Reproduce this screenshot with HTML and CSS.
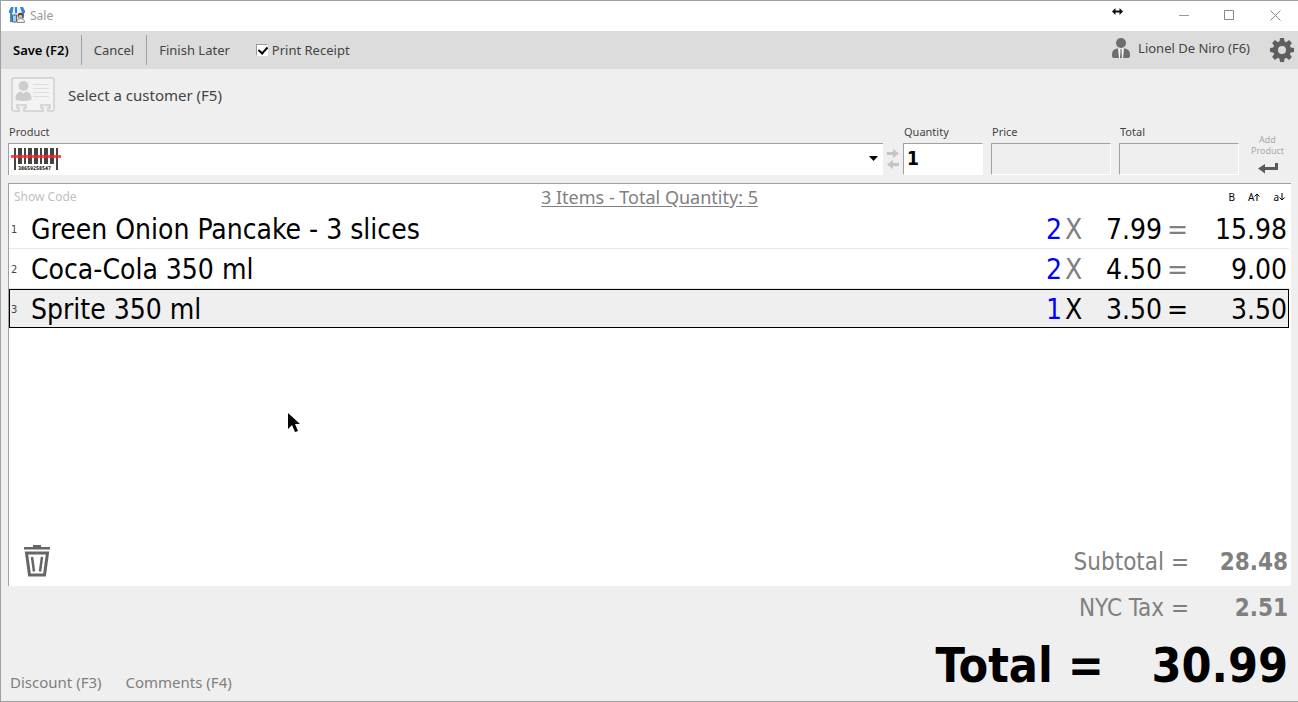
FILE: index.html
```html
<!DOCTYPE html>
<html lang="en">
<head>
  <meta charset="UTF-8">
  <meta name="viewport" content="width=device-width, initial-scale=1.0">
  <title>Sale</title>
  <link rel="stylesheet" href="styles.css">
</head>
<body>
  <div class="window">
    <header class="titlebar">
      <svg class="app-icon" width="16" height="16" viewBox="0 0 16 16">
        <path d="M1 5h14v10H1z" fill="#d9e6f2"/>
        <path d="M1 6v9h2V6zM13 6v5h2V6z" fill="#5b7fa8"/>
        <path d="M2 0h12l2 4v2H0V4z" fill="#e8f3ff"/>
        <path d="M2 0h2.500L3.500 6H0V4zM6 0h2v6H6zM11 0h3l2 4v2h-3z" fill="#2f86e8"/>
        <path d="M3.500 8h4v7h-4z" fill="#9ed0ee" stroke="#3d6c99"/>
        <path d="M8 15.500c0-3 1.500-4 3.500-4s4 1 4 4z" fill="#f2f2f2" stroke="#888"/>
        <circle cx="11.500" cy="8.500" r="2.800" fill="#6b3f22"/>
        <circle cx="11.500" cy="9.500" r="1.800" fill="#f0b98a"/>
      </svg>
      <h1 class="title">Sale</h1>
      <svg class="resize-cursor" width="11" height="7" viewBox="0 0 11 7">
        <path d="M0 3.500L3.500 0v2.500h4V0L11 3.500 7.500 7V4.500h-4V7z" fill="#111"/>
      </svg>
      <div class="window-buttons">
        <button class="window-button" aria-label="Minimize">
          <svg width="11" height="11" viewBox="0 0 11 11"><path d="M1 5.500h10" stroke="#999"/></svg>
        </button>
        <button class="window-button" aria-label="Maximize">
          <svg width="11" height="11" viewBox="0 0 11 11"><path d="M.5 .5h9v9h-9z" fill="none" stroke="#888"/></svg>
        </button>
        <button class="window-button" aria-label="Close">
          <svg width="11" height="11" viewBox="0 0 11 11"><path d="M.5 .5l10 10M10.500 .5l-10 10" stroke="#888"/></svg>
        </button>
      </div>
    </header>

    <div class="toolbar">
      <button class="tool save">Save (F2)</button>
      <button class="tool">Cancel</button>
      <button class="tool">Finish Later</button>
      <label class="print"><input type="checkbox" checked>Print Receipt</label>
      <button class="user">
        <svg width="18" height="20" viewBox="0 0 18 20" fill="#6e6e6e">
          <circle cx="9" cy="5" r="5"/>
          <path d="M0 18v-2c0-3 2-5 5-5.500l4 .500 4-.500c3 .500 5 2.500 5 5.500v2q0 2-2 2H2q-2 0-2-2z"/>
          <path d="M6 10.500h6L11 20H7z" fill="#f5f5f5"/>
          <path d="M8 11.500h2l-.500 1.500.5 7H8l.5-7z"/>
        </svg>
        Lionel De Niro (F6)
      </button>
      <button class="settings" aria-label="Settings">
        <svg width="24" height="24" viewBox="0 0 24 24">
          <g fill="#5f5f5f">
            <path id="tooth" d="M10 0h4l1 6H9z"/>
            <use href="#tooth" transform="rotate(45 12 12)"/>
            <use href="#tooth" transform="rotate(90 12 12)"/>
            <use href="#tooth" transform="rotate(135 12 12)"/>
            <use href="#tooth" transform="rotate(180 12 12)"/>
            <use href="#tooth" transform="rotate(225 12 12)"/>
            <use href="#tooth" transform="rotate(270 12 12)"/>
            <use href="#tooth" transform="rotate(315 12 12)"/>
          </g>
          <circle cx="12" cy="12" r="6.500" fill="none" stroke="#5f5f5f" stroke-width="5"/>
        </svg>
      </button>
    </div>

    <button class="customer">
      <svg width="44" height="35" viewBox="0 0 44 35">
        <path d="M3 1h38q2 0 2 2v29q0 2-2 2h-4v-3h2v-3h-9v3h2v3H13v-3h2v-3H6v3h2v3H3q-2 0-2-2V3q0-2 2-2z" fill="#f3f3f3" stroke="#cfcfcf" stroke-width="1.500"/>
        <circle cx="12.500" cy="9" r="5" fill="#cdcdcd"/>
        <path d="M4.500 23v-2c0-4 3-6 5-6.500l3 2 3-2c2 .500 5 2.500 5 6.500v2q-8 2-16 0z" fill="#cdcdcd"/>
        <path d="M22 7.500h16M22 11.500h16M22 15.500h16M22 19.500h16" stroke="#dedede"/>
      </svg>
      Select a customer (F5)
    </button>

    <div class="entry">
      <div class="field product">
        <label for="product">Product</label>
        <div class="combo">
          <svg width="50" height="24" viewBox="0 0 50 24">
            <path d="M3 1h2v22H3zM7 1h4v16H7zM13 1h2v16h-2zM17 1h4v16h-4zM23 1h4v16h-4zM29 1h2v16h-2zM33 1h4v16h-4zM39 1h4v16h-4zM45 1h2v22h-2z" fill="#444"/>
            <text class="barcode-digits" x="7" y="23">38659258547</text>
            <path d="M0 8h50v3H0z" fill="#f22" fill-opacity=".8"/>
          </svg>
          <input id="product" type="text">
          <button class="combo-arrow" aria-label="Show products">
            <svg width="9" height="5" viewBox="0 0 9 5"><path d="M0 0h9L4.500 5z"/></svg>
          </button>
        </div>
      </div>
      <button class="swap" aria-label="Swap">
        <svg width="12" height="20" viewBox="0 0 12 20" fill="#c4c4c4">
          <path d="M0 3h6V0l6 4.500L6 9V6H0zM12 14H6v-3L0 15.500 6 20v-3h6z"/>
        </svg>
      </button>
      <div class="field quantity">
        <label for="quantity">Quantity</label>
        <input id="quantity" type="text" value="1">
      </div>
      <div class="field amount">
        <label for="price">Price</label>
        <input id="price" type="text" disabled>
      </div>
      <div class="field amount">
        <label for="total">Total</label>
        <input id="total" type="text" disabled>
      </div>
      <button class="add">
        <span>Add</span>
        <span>Product</span>
        <svg width="20" height="12" viewBox="0 0 20 12"><path d="M17 1h3v7H7v3.500L0 6.500 7 2v3h10z" fill="#5a5a5a"/></svg>
      </button>
    </div>

    <main class="list">
      <div class="list-head">
        <button class="show-code">Show Code</button>
        <a class="summary" href="#">3 Items - Total Quantity: 5</a>
        <div class="font-tools">
          <button>B</button>
          <button>A<svg width="6" height="8" viewBox="0 0 6 8"><path d="M3 8V1M.5 3.500L3 1l2.500 2.500" fill="none" stroke="#000"/></svg></button>
          <button>a<svg width="6" height="8" viewBox="0 0 6 8"><path d="M3 0v7M.5 4.500L3 7l2.500-2.500" fill="none" stroke="#000"/></svg></button>
        </div>
      </div>
      <table class="items">
        <colgroup>
          <col class="col-no">
          <col>
          <col class="col-qty">
          <col class="col-x">
          <col class="col-price">
          <col class="col-eq">
          <col class="col-sum">
        </colgroup>
        <tbody>
          <tr>
            <td class="no">1</td>
            <td>Green Onion Pancake - 3 slices</td>
            <td class="num qty">2</td>
            <td class="sign">X</td>
            <td class="num">7.99</td>
            <td class="sign">=</td>
            <td class="num">15.98</td>
          </tr>
          <tr>
            <td class="no">2</td>
            <td>Coca-Cola 350 ml</td>
            <td class="num qty">2</td>
            <td class="sign">X</td>
            <td class="num">4.50</td>
            <td class="sign">=</td>
            <td class="num">9.00</td>
          </tr>
          <tr class="selected">
            <td class="no">3</td>
            <td>Sprite 350 ml</td>
            <td class="num qty">1</td>
            <td class="sign">X</td>
            <td class="num">3.50</td>
            <td class="sign">=</td>
            <td class="num">3.50</td>
          </tr>
        </tbody>
      </table>
      <div class="list-foot">
        <button class="delete" aria-label="Delete item">
          <svg width="26" height="32" viewBox="0 0 26 32">
            <path d="M9 0h8v2h9v2.500H0V2h9z" fill="#666"/>
            <path d="M2.500 8h21L20.500 30h-15z" fill="none" stroke="#666" stroke-width="3"/>
            <path d="M8 12l2 14.500M18 12l-2 14.500" stroke="#666" stroke-width="2.500"/>
          </svg>
        </button>
        <div class="line">
          <span>Subtotal =</span>
          <strong>28.48</strong>
        </div>
      </div>
    </main>

    <footer class="footer">
      <div class="links">
        <button>Discount (F3)</button>
        <button>Comments (F4)</button>
      </div>
      <div class="totals">
        <div class="line">
          <span>NYC Tax =</span>
          <strong>2.51</strong>
        </div>
        <div class="grand">
          <span>Total =</span>
          <strong>30.99</strong>
        </div>
      </div>
    </footer>

    <!-- mouse pointer -->
    <svg class="pointer" width="12" height="19" viewBox="0 0 12 19">
      <path d="M0 0v16l4-4 3 7 3-1-3-7h5z"/>
    </svg>
  </div>
</body>
</html>
```
FILE: styles.css
```css
:root {
  --ui-font: "Noto Sans", "Open Sans", sans-serif;
  --list-font: "DejaVu Sans Condensed", "DejaVu Sans", sans-serif;
  --border-color: #a0a0a0;
  --panel-bg: #efefef;
  --bar-bg: #dcdcdc;
  --muted: #808080;
}
* {
  box-sizing: border-box;
}
body {
  margin: 0;
  background: var(--panel-bg);
  color: #444;
  font-family: var(--ui-font);
  font-size: 13px;
}
button {
  padding: 0;
  border: none;
  background: none;
  color: inherit;
  font: inherit;
  cursor: pointer;
}
svg {
  display: block;
  flex: none;
}
.window {
  position: relative;
  display: flex;
  flex-direction: column;
  min-height: 100vh;
  border: 1px solid var(--border-color);
  border-right: none;
}

/* Title bar */
.titlebar {
  display: flex;
  align-items: center;
  height: 30px;
  padding: 0 0 2px 8px;
  background: #fff;
}
.title {
  margin: 0 auto 0 5px;
  color: #999;
  font-size: 12px;
  font-weight: normal;
}
.resize-cursor {
  margin: 0 37px 8px 0;
}
.window-buttons {
  display: flex;
}
.window-button {
  display: flex;
  align-items: center;
  justify-content: center;
  width: 46px;
  height: 28px;
}

/* Toolbar */
.toolbar {
  display: flex;
  align-items: center;
  height: 38px;
  padding-right: 4px;
  background: var(--bar-bg);
}
.tool {
  height: 30px;
  padding: 0 12px;
}
.tool + .tool {
  border-left: 1px solid var(--border-color);
}
.tool.save {
  color: #000;
  font-weight: 600;
}
.print {
  display: flex;
  align-items: center;
  gap: 4px;
  margin-left: 14px;
}
.print input {
  appearance: none;
  width: 12px;
  height: 12px;
  margin: 0;
  border: 1px solid #999;
  border-right-color: #fff;
  border-bottom-color: #fff;
  background: #fff;
}
.print input:checked::before {
  content: "";
  display: block;
  width: 4px;
  height: 7px;
  margin-left: 3px;
  border: solid #000;
  border-width: 0 2px 2px 0;
  transform: rotate(42deg);
}
.user {
  display: flex;
  align-items: center;
  gap: 8px;
  margin: 0 20px 4px auto;
}

/* Customer */
.customer {
  display: flex;
  align-items: center;
  gap: 13px;
  align-self: flex-start;
  height: 51px;
  padding-left: 10px;
  font-size: 15px;
}

/* Product entry */
.entry {
  display: flex;
  align-items: flex-end;
  gap: 8px;
  height: 55px;
  padding: 0 10px 0 7px;
}
.field {
  display: flex;
  flex-direction: column;
  font-size: 11px;
}
.field label {
  margin-left: 1px;
  line-height: 13px;
  padding-bottom: 5px;
}
.field input {
  width: 100%;
  height: 32px;
  padding: 0 3px 2px;
  border: 1px solid var(--border-color);
  border-right-color: #fff;
  border-bottom-color: #fff;
  background: #fff;
  font-family: var(--list-font);
  font-size: 19px;
  font-weight: bold;
}
.field input:disabled {
  background: var(--panel-bg);
}
.field.product {
  flex: 1;
}
.field.quantity {
  width: 80px;
}
.field.amount {
  width: 120px;
}
.combo {
  display: flex;
  align-items: center;
  height: 32px;
  padding: 0 5px 2px 2px;
  border: solid var(--border-color);
  border-width: 1px 0 0 1px;
  background: #fff;
}
.field .combo input {
  flex: 1;
  height: 100%;
  border: none;
}
.barcode-digits {
  font-family: "DejaVu Sans Mono", monospace;
  font-size: 5px;
  font-weight: bold;
}
.swap {
  margin: 0 -4px 6px;
}
.add {
  display: flex;
  flex-direction: column;
  align-items: center;
  width: 41px;
  color: #aaa;
  font-size: 9px;
  line-height: 11px;
}
.add svg {
  margin: 6px 0 1px;
}

/* Item list */
.list {
  display: flex;
  flex: 1;
  flex-direction: column;
  margin: 8px 7px 0;
  padding-right: 2px;
  border: solid var(--border-color);
  border-width: 1px 0 0 1px;
  background: #fff;
}
.list-head {
  display: grid;
  grid-template-columns: 1fr auto 1fr;
  align-items: center;
  height: 25px;
  padding: 0 4px 0 5px;
}
.show-code {
  justify-self: start;
  color: #c0c0c0;
  font-size: 12px;
}
.summary {
  color: var(--muted);
  font-size: 18px;
  text-underline-offset: 2px;
}
.font-tools {
  display: flex;
  justify-self: end;
  gap: 13px;
  color: #000;
  font-size: 10px;
}
.font-tools button {
  display: flex;
  align-items: center;
}
.items {
  width: 100%;
  table-layout: fixed;
  border-spacing: 0;
  color: #000;
  font-family: var(--list-font);
  font-size: 28px;
  line-height: 36px;
}
.items td {
  height: 40px;
  padding: 3px 0 0;
  border-bottom: 1px solid #e8e8e8;
  white-space: nowrap;
}
.items .selected td {
  height: 39px;
  border-bottom: none;
}
.items tr.selected {
  outline: 1px solid #000;
  outline-offset: -1px;
  background: var(--panel-bg);
}
.col-no { width: 22px; }
.col-qty { width: 40px; }
.col-x { width: 25px; }
.col-price { width: 77px; }
.col-eq { width: 27px; }
.col-sum { width: 98px; }
.items .no {
  padding-left: 2px;
  color: #444;
  font-size: 11px;
}
.items .num {
  padding-right: 2px;
  text-align: right;
}
.items .qty {
  padding-right: 0;
  color: #00f;
}
.items .sign {
  padding-left: 3px;
  color: var(--muted);
}
.items .selected .sign {
  color: #000;
}
.list-foot {
  display: flex;
  align-items: center;
  justify-content: space-between;
  height: 50px;
  margin-top: auto;
  padding: 0 1px 0 15px;
}

/* Totals */
.line {
  display: flex;
  padding-top: 2px;
  color: var(--muted);
  font-family: var(--list-font);
  font-size: 24px;
  line-height: 30px;
}
.line strong {
  width: 99px;
  text-align: right;
}
.footer {
  display: flex;
  justify-content: space-between;
  height: 115px;
  padding: 5px 10px 9px 9px;
}
.links {
  display: flex;
  gap: 24px;
  align-self: flex-end;
  color: var(--muted);
  font-size: 15px;
}
.totals {
  display: flex;
  flex-direction: column;
  align-items: flex-end;
}
.grand {
  display: flex;
  color: #000;
  font-family: var(--list-font);
  font-size: 48px;
  font-weight: bold;
  line-height: 84px;
}
.grand strong {
  width: 184px;
  text-align: right;
}

.pointer {
  position: absolute;
  top: 412px;
  left: 287px;
  pointer-events: none;
}
```
